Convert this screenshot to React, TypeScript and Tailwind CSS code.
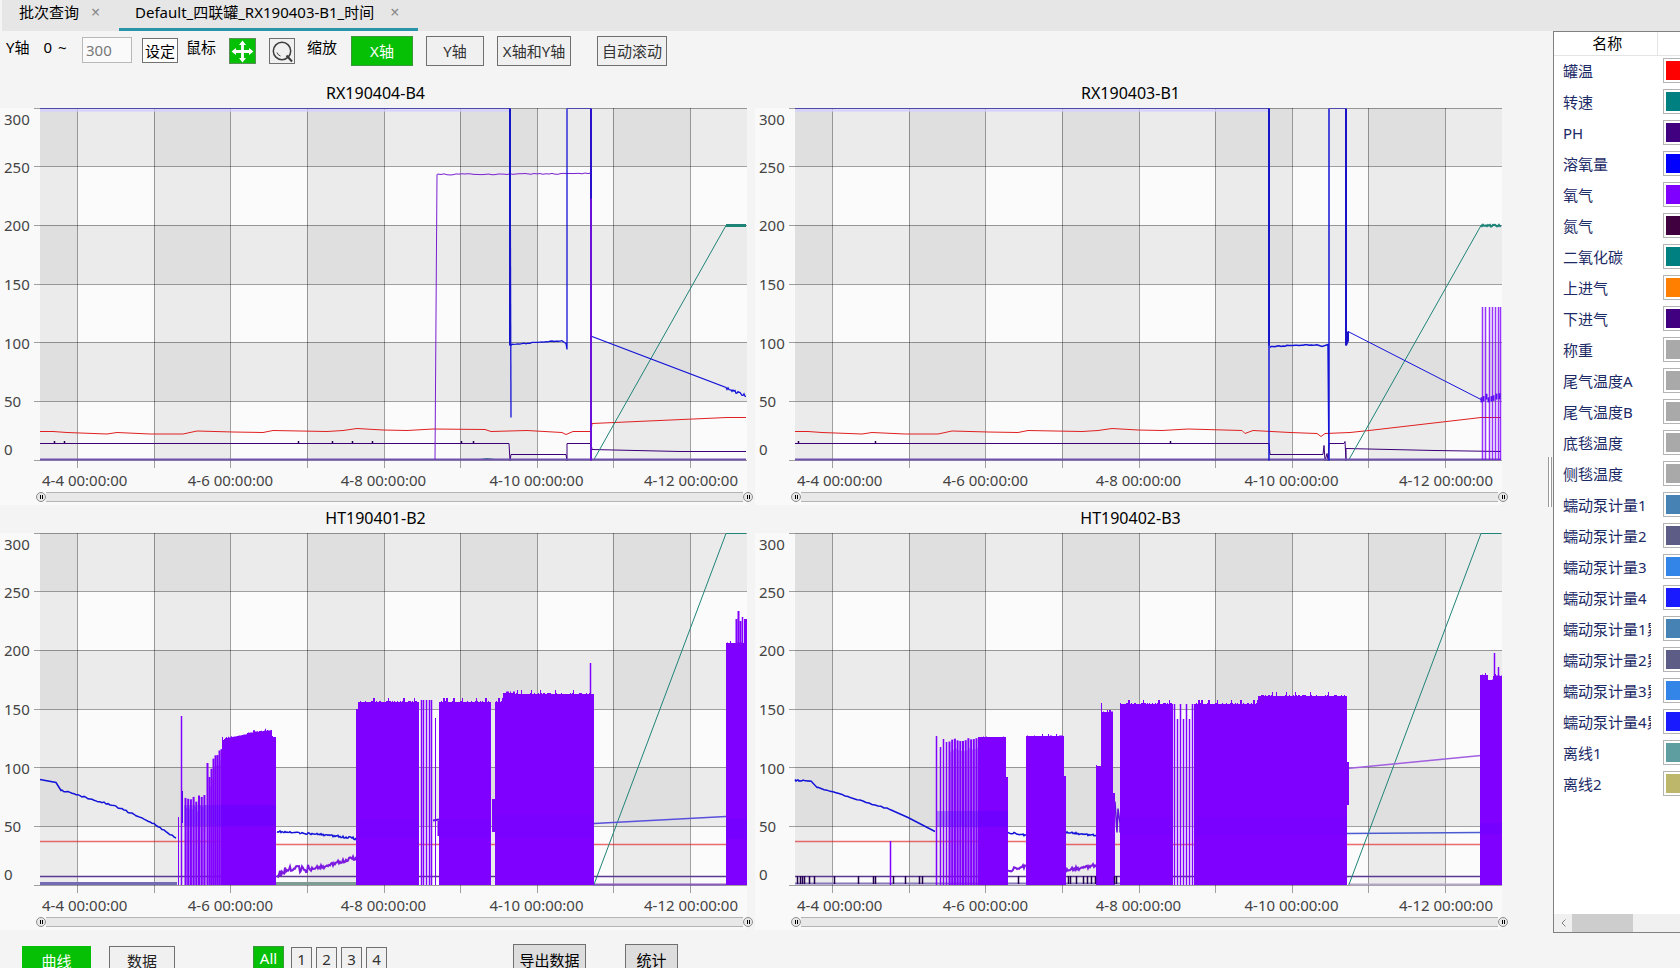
import { useState } from 'react';
import clsx from 'clsx';

type Point = [number, number];

interface Line {
  points: Point[];
  color: string;
  width?: number;
  opacity?: number;
}

interface Block {
  from: number;
  to: number;
  top: number;
  topEnd?: number;
  jitter?: number;
}

interface Band {
  from: number;
  to: number;
  top: number;
  bottom: number;
  opacity?: number;
}

interface Spike {
  x: number;
  top: number;
  bottom?: number;
  width?: number;
  color?: string;
  opacity?: number;
}

interface ChartData {
  title: string;
  lines: Line[];
  blocks?: Block[];
  bands?: Band[];
  spikes?: Spike[];
}

interface Channel {
  name: string;
  color: string;
}

// 曲线颜色
const RED = '#e02020';
const TEAL = '#1f8478';
const INDIGO = '#3a0078';
const BLUE = '#1414d8';
const PURPLE = '#8000ff';

// 绘图区坐标系
const W = 707;
const H = 352;
const GRID_X = [37, 114, 190, 267, 344, 420, 497, 573, 650];
const GRID_Y = [0, 58, 117, 176, 234, 293, 352];

const rand = (n: number) => {
  const v = Math.sin(n * 127.1 + 11.7) * 43758.5453;
  return v - Math.floor(v);
};

// 在两点之间生成带噪声的曲线
const noisy = (from: Point, to: Point, amp: number, step = 1): Point[] => {
  const result: Point[] = [];
  for (let x = from[0]; x <= to[0]; x += step) {
    const t = (x - from[0]) / (to[0] - from[0]);
    result.push([x, from[1] + (to[1] - from[1]) * t + (rand(x * 3.3) - 0.5) * 2 * amp]);
  }
  return result;
};

const comb = (from: number, to: number, step: number, top: number, topEnd: number, amp = 3): Spike[] => {
  const result: Spike[] = [];
  for (let x = from; x <= to; x += step) {
    const t = (x - from) / (to - from);
    const y = top + (topEnd - top) * t + rand(x) * amp;
    result.push({ x, top: y, width: 2 });
    result.push({ x: x + 1, top: y + 10, width: 2, opacity: 0.4 });
  }
  return result;
};

const marks = (xs: number[], top: number, bottom: number): Spike[] =>
  xs.map((x) => ({ x, top, bottom, color: '#240050', width: 1.5 }));

const blockPath = ({ from, to, top, topEnd = top, jitter = 2 }: Block) => {
  let d = `M${from} ${H}`;
  for (let x = from; x <= to; x += 1) {
    const t = (x - from) / (to - from || 1);
    const r = rand(x * 1.7);
    const y = top + (topEnd - top) * t - (r > 0.85 ? jitter * 2 : r > 0.6 ? jitter / 2 : 0);
    d += `V${y.toFixed(1)}H${Math.min(x + 1, to)}`;
  }
  return `${d}V${H}Z`;
};

const redStart: Point[] = [
  [0, 323], [13, 323], [27, 324], [67, 325.5], [77, 324], [110, 325.5], [143, 325.5], [157, 322.5],
  [193, 323.5], [223, 324], [233, 322], [287, 323], [303, 322], [317, 320], [343, 321.5], [367, 322], [393, 320.5],
];

const charts: ChartData[] = [
  {
    title: 'RX190404-B4',
    lines: [
      { points: [[0, 2], [470, 2]], color: '#d4d0ff', width: 2 },
      { points: [[0, 0], [470, 0]], color: '#4f48ac' },
      { points: [[396, 351], [440, 351], [447, 350], [455, 351], [551, 351]], color: TEAL },
      { points: [...redStart, [445, 321], [451, 323], [487, 322], [522, 324], [526, 326], [533, 323], [551, 323], [552, 315], [687, 309], [706, 309]], color: RED },
      { points: [[0, 335], [469, 335], [470, 352], [471, 346], [526, 346], [527, 352], [527, 335], [551, 335], [552, 341], [640, 343], [706, 343]], color: INDIGO },
      { points: [[554, 351], [686, 117]], color: TEAL },
      { points: [[686, 117], [706, 117]], color: TEAL, width: 3 },
      { points: [[0, 351], [706, 351]], color: '#6f52b0', width: 2 },
      { points: [[395, 351], [397, 66], ...noisy([398, 66], [551, 65], 0.6, 3), [551, 352]], color: '#7a1fd0' },
      { points: [[470, 0], [471, 309]], color: BLUE, width: 1.3 },
      { points: [[470, 0], [470, 237]], color: '#1616c8', width: 2 },
      { points: [[471, 237], ...noisy([472, 236], [522, 232], 0.5, 2), [526, 235], [527, 241], [527, 0]], color: BLUE, width: 1.3 },
      { points: [[527, 0], [551, 0]], color: '#4f48ac' },
      { points: [[551, 0], [551, 228]], color: '#2a10cc', width: 2 },
      { points: [[551, 90], [551, 352]], color: '#6a10d8', width: 2 },
      { points: [[552, 228], [686, 279], ...noisy([687, 280], [706, 287], 1.5)], color: BLUE, width: 1.3 },
    ],
    spikes: marks([14, 24, 258, 292, 312, 332, 421, 433], 333, 335),
  },
  {
    title: 'RX190403-B1',
    lines: [
      { points: [[0, 2], [474, 2]], color: '#d4d0ff', width: 2 },
      { points: [[0, 0], [474, 0]], color: '#4f48ac' },
      { points: [...redStart, [447, 322], [450, 325], [458, 322], [495, 324], [522, 325], [526, 328], [530, 325], [555, 324], [574, 322], [686, 309], [706, 309]], color: RED },
      { points: [[0, 335], [474, 335], [475, 346], [528, 346], [529, 337], [530, 352], [532, 345], [533, 352], [534, 335], [549, 335], [550, 333], [551, 352], [551, 340], [640, 342], [706, 343]], color: INDIGO },
      { points: [[554, 351], [686, 117]], color: TEAL },
      { points: noisy([686, 117], [706, 117], 1), color: TEAL, width: 2 },
      { points: [[0, 351], [706, 351]], color: '#6f52b0', width: 2 },
      { points: [[474, 0], [474, 352]], color: BLUE, width: 1.5 },
      { points: [[474, 0], [474, 237]], color: '#1616c8', width: 2 },
      { points: [[475, 239], ...noisy([476, 238], [522, 236], 0.5, 2), [527, 238], [533, 236], [534, 352], [534, 0]], color: BLUE, width: 1.5 },
      { points: [[534, 0], [551, 0]], color: '#4f48ac' },
      { points: [[551, 0], [551, 237], [553, 232], [553, 223]], color: '#1a12c8', width: 2 },
      { points: [[553, 223], [686, 291]], color: BLUE },
    ],
    spikes: [
      ...marks([3, 80, 375], 333, 335),
      ...[687, 690, 694, 697, 700, 703, 705].map((x) => ({ x, top: 199, width: 1.5, opacity: 0.8 })),
      ...[686, 688, 691, 693, 696, 698, 701, 704].map((x) => ({ x, top: 285 + rand(x) * 5, bottom: 291 + rand(x) * 4, color: '#5a10f0', width: 2 })),
    ],
  },
  {
    title: 'HT190401-B2',
    lines: [
      { points: [[0, 308], [233, 308]], color: RED, width: 1.5, opacity: 0.65 },
      { points: [[236, 311], [706, 311]], color: RED, width: 1.5, opacity: 0.65 },
      { points: [[0, 343], [706, 343]], color: '#5b3a92', width: 1.5 },
      { points: [[0, 350], [137, 350]], color: '#736cb4', width: 3 },
      { points: [[236, 350], [316, 350]], color: '#7c9c94', width: 3 },
      { points: [[553, 351], [686, 351]], color: '#8a5cc0', width: 2 },
      { points: [[554, 351], [686, 0], [706, 0]], color: TEAL },
      { points: [[0, 246], [16, 249], [21, 257], ...noisy([22, 257], [73, 272], 0.8, 2), ...noisy([74, 272], [113, 290], 0.8, 2), ...noisy([114, 290], [137, 305], 0.8, 2)], color: BLUE, width: 1.5 },
      { points: [...noisy([237, 298], [281, 301], 0.8), ...noisy([282, 301], [316, 305], 1.2)], color: BLUE, width: 1.5 },
      { points: [[554, 290], [686, 283]], color: '#5a50dc', width: 1.5 },
      { points: [...noisy([237, 341], [243, 339], 3), ...noisy([244, 337], [268, 335], 4), ...noisy([269, 336], [290, 332], 2), ...noisy([291, 331], [316, 324], 2)], color: '#7d1ae0', width: 2 },
      { points: [[393, 287], [399, 286]], color: '#5a10e0', width: 2 },
    ],
    blocks: [
      { from: 182, to: 187, top: 208, topEnd: 203 },
      { from: 187, to: 207, top: 205, topEnd: 201 },
      { from: 207, to: 232, top: 200, topEnd: 197, jitter: 1 },
      { from: 232, to: 236, top: 204 },
      { from: 316, to: 318, top: 177 },
      { from: 318, to: 379, top: 169 },
      { from: 399, to: 451, top: 169 },
      { from: 455, to: 463, top: 169 },
      { from: 463, to: 475, top: 160, jitter: 3 },
      { from: 475, to: 554, top: 161 },
      { from: 686, to: 707, top: 110, jitter: 1 },
    ],
    bands: [
      { from: 144, to: 236, top: 272, bottom: 293, opacity: 0.3 },
      { from: 318, to: 379, top: 286, bottom: 305 },
      { from: 399, to: 451, top: 286, bottom: 305 },
      { from: 455, to: 554, top: 282, bottom: 305 },
      { from: 686, to: 707, top: 286, bottom: 306, opacity: 0.2 },
    ],
    spikes: [
      { x: 138, top: 284 },
      { x: 141, top: 183, width: 1.5 },
      { x: 142, top: 258, bottom: 290, color: '#4a10e0' },
      ...comb(145, 165, 2.7, 264, 258, 8),
      { x: 167, top: 230, width: 2 },
      ...comb(169, 173, 2, 243, 222, 4),
      ...comb(175, 181, 2, 218, 213, 6),
      ...[381, 383, 386, 389, 391].map((x) => ({ x, top: 167, width: 1.5 })),
      { x: 395, top: 185 },
      { x: 398, top: 288, bottom: 303, width: 2 },
      { x: 453, top: 266, bottom: 299, width: 3 },
      { x: 550, top: 130, width: 1.5 },
      { x: 696, top: 86, width: 2 },
      { x: 698, top: 78, width: 2 },
      { x: 700, top: 88, width: 2 },
      { x: 702, top: 84, width: 1.5 },
      { x: 705, top: 86, width: 3 },
    ],
  },
  {
    title: 'HT190402-B3',
    lines: [
      { points: [[0, 308], [270, 308]], color: RED, width: 1.5, opacity: 0.65 },
      { points: [[271, 311], [706, 311]], color: RED, width: 1.5, opacity: 0.65 },
      { points: [[0, 343], [706, 343]], color: '#5b3a92', width: 1.5 },
      { points: [[0, 350], [325, 350]], color: '#8878bc', width: 2 },
      { points: [[553, 351], [686, 351]], color: '#b4a8c4', width: 2 },
      { points: [[554, 351], [686, 0], [706, 0]], color: TEAL },
      { points: [[0, 246], ...noisy([1, 247], [16, 247], 0.8), [22, 254], ...noisy([23, 254], [95, 276], 0.5, 3), [113, 284], [140, 298]], color: BLUE, width: 1.5 },
      { points: noisy([213, 299], [231, 302], 1), color: BLUE, width: 1.5 },
      { points: noisy([271, 299], [301, 302], 1), color: BLUE, width: 1.5 },
      { points: [[320, 268], [322, 299], [323, 275], [325, 290], [325, 299]], color: '#6410e0', width: 1.5 },
      { points: [[552, 300], [686, 299]], color: '#4a5cd0', width: 1.5 },
      { points: [[552, 235], [686, 222]], color: '#a060e0', width: 1.5 },
      { points: noisy([213, 337], [231, 333], 2), color: '#7d1ae0', width: 2 },
      { points: noisy([271, 337], [301, 332], 2), color: '#7d1ae0', width: 2 },
    ],
    blocks: [
      { from: 183, to: 211, top: 204, jitter: 1 },
      { from: 211, to: 213, top: 244 },
      { from: 231, to: 269, top: 203, jitter: 1 },
      { from: 269, to: 271, top: 243 },
      { from: 301, to: 306, top: 233 },
      { from: 306, to: 318, top: 179, jitter: 1 },
      { from: 318, to: 320, top: 260 },
      { from: 325, to: 378, top: 171 },
      { from: 399, to: 463, top: 171 },
      { from: 463, to: 552, top: 163 },
      { from: 685, to: 693, top: 142, jitter: 1 },
      { from: 693, to: 698, top: 147, jitter: 1 },
      { from: 698, to: 707, top: 143, jitter: 1 },
    ],
    bands: [
      { from: 142, to: 213, top: 278, bottom: 294, opacity: 0.35 },
      { from: 325, to: 378, top: 284, bottom: 302 },
      { from: 399, to: 552, top: 284, bottom: 302 },
      { from: 685, to: 707, top: 290, bottom: 301, opacity: 0.2 },
    ],
    spikes: [
      ...marks([2, 5, 7, 9, 14, 19, 39, 63, 78, 80, 98, 110, 124, 127, 223, 273, 275, 281, 288, 292, 296, 300, 319, 321], 343, 351),
      { x: 95, top: 308, width: 1.5 },
      { x: 141, top: 203, width: 1.5 },
      { x: 145, top: 214, width: 1.5 },
      { x: 148, top: 206, width: 1.5 },
      { x: 151, top: 209, width: 1.5 },
      ...comb(154, 182, 2.7, 206, 203, 4),
      { x: 306, top: 170 },
      ...[379, 382, 385, 388, 391, 394, 397].map((x) => ({ x, top: x % 2 ? 171 : 186, width: 1.5 })),
      { x: 552, top: 229, bottom: 272, width: 3 },
      { x: 699, top: 120, width: 1.5 },
      { x: 703, top: 134, width: 1.5 },
    ],
  },
];

const channels: Channel[] = [
  { name: '罐温', color: '#ff0000' },
  { name: '转速', color: '#008080' },
  { name: 'PH', color: '#400080' },
  { name: '溶氧量', color: '#0000ff' },
  { name: '氧气', color: '#8000ff' },
  { name: '氮气', color: '#400040' },
  { name: '二氧化碳', color: '#008080' },
  { name: '上进气', color: '#ff8000' },
  { name: '下进气', color: '#400080' },
  { name: '称重', color: '#a9a9a9' },
  { name: '尾气温度A', color: '#a9a9a9' },
  { name: '尾气温度B', color: '#a9a9a9' },
  { name: '底毯温度', color: '#a9a9a9' },
  { name: '侧毯温度', color: '#a9a9a9' },
  { name: '蠕动泵计量1', color: '#4682b4' },
  { name: '蠕动泵计量2', color: '#5c5c86' },
  { name: '蠕动泵计量3', color: '#3385e8' },
  { name: '蠕动泵计量4', color: '#1a1aff' },
  { name: '蠕动泵计量1累计', color: '#4682b4' },
  { name: '蠕动泵计量2累计', color: '#5c5c86' },
  { name: '蠕动泵计量3累计', color: '#3385e8' },
  { name: '蠕动泵计量4累计', color: '#1a1aff' },
  { name: '离线1', color: '#5f9ea0' },
  { name: '离线2', color: '#bdb76b' },
];

// 绘图区：底纹、网格和曲线
function Plot({ data }: { data: ChartData }) {
  const columns = [0, ...GRID_X, W];
  return (
    <svg
      viewBox={`0 0 ${W} ${H}`}
      preserveAspectRatio="none"
      className="block h-88 w-full overflow-visible"
      role="img"
      aria-label={data.title}
    >
      <rect width={W} height={H} fill="#fbfbfb" />
      {columns.slice(0, -1).map((x, i) =>
        GRID_Y.slice(0, -1).map((y, j) => {
          const dark = (i % 2 === 0 ? 1 : 0) + (j % 2 === 0 ? 1 : 0);
          if (!dark) return null;
          return (
            <rect
              key={`${i}-${j}`}
              x={x}
              y={y}
              width={columns[i + 1] - x}
              height={GRID_Y[j + 1] - y}
              fill={dark === 2 ? '#dfdfdf' : '#ebebeb'}
              shapeRendering="crispEdges"
            />
          );
        })
      )}
      <g stroke="#000000" strokeOpacity="0.36" shapeRendering="crispEdges">
        {GRID_X.map((x) => (
          <line key={x} x1={x + 0.5} x2={x + 0.5} y1={0} y2={H + 8} />
        ))}
        {GRID_Y.map((y) => (
          <line key={y} x1={-6} x2={W} y1={y + 0.5} y2={y + 0.5} />
        ))}
      </g>
      {data.lines.map((line, i) => (
        <polyline
          key={i}
          points={line.points.map(([x, y]) => `${x},${y + 0.5}`).join(' ')}
          fill="none"
          stroke={line.color}
          strokeWidth={line.width ?? 1}
          strokeOpacity={line.opacity ?? 1}
        />
      ))}
      {data.blocks?.map((block) => (
        <path key={block.from} d={blockPath(block)} fill={PURPLE} />
      ))}
      {data.spikes?.map((s, i) => (
        <line
          key={i}
          x1={s.x + 0.5}
          x2={s.x + 0.5}
          y1={s.top}
          y2={s.bottom ?? H}
          stroke={s.color ?? PURPLE}
          strokeWidth={s.width ?? 1}
          strokeOpacity={s.opacity ?? 1}
        />
      ))}
      {data.bands?.map((b) => (
        <rect
          key={b.from}
          x={b.from}
          y={b.top}
          width={b.to - b.from}
          height={b.bottom - b.top}
          fill="#5000ff"
          fillOpacity={b.opacity ?? 0.12}
        />
      ))}
    </svg>
  );
}

function RangeHandle({ label }: { label: string }) {
  return (
    <button
      aria-label={label}
      className="flex h-[10px] w-[10px] items-center justify-center gap-px rounded-full border border-[#8c8c8c] bg-[#e8e8e8]"
    >
      <span className="h-1 w-px bg-black" />
      <span className="h-1 w-px bg-black" />
    </button>
  );
}

function Chart({ data }: { data: ChartData }) {
  return (
    <section className="flex flex-col pr-2">
      <h2 className="h-7 pl-1 text-center text-[16px] leading-[26px] text-black">{data.title}</h2>
      <div className="flex bg-[#f9f9f9] text-[15px] text-[#444444]">
        <div className="flex h-88 w-10 shrink-0 flex-col pl-1 leading-[22px]">
          <span className="flex-1">300</span>
          {[250, 200, 150, 100, 50].map((value) => (
            <span key={value} className="flex flex-2 items-center">{value}</span>
          ))}
          <span className="flex flex-1 items-end">0</span>
        </div>
        <div className="min-w-0 flex-1">
          <Plot data={data} />
          <div className="mt-2 grid h-6 grid-cols-[114fr_153fr_153fr_153fr_134fr] text-center leading-6 whitespace-nowrap">
            <span className="pl-[2px] text-left">4-4 00:00:00</span>
            <span>4-6 00:00:00</span>
            <span>4-8 00:00:00</span>
            <span>4-10 00:00:00</span>
            <span className="pr-[9px] text-right">4-12 00:00:00</span>
          </div>
          <div className="-mr-[6px] -ml-1 mb-[3px] flex h-[10px] items-center">
            <RangeHandle label="起始时间" />
            <div className="h-[10px] flex-1 border-y border-[#b4b4b4] bg-[#e8e8e8]" />
            <RangeHandle label="结束时间" />
          </div>
        </div>
      </div>
    </section>
  );
}

const tools = [
  { key: 'x', label: 'X轴', className: 'w-[62px]' },
  { key: 'y', label: 'Y轴', className: 'ml-[13px] w-[58px]' },
  { key: 'xy', label: 'X轴和Y轴', className: 'ml-[13px] w-[74px]' },
];

function Toolbar() {
  const [yMax, setYMax] = useState('300');
  const [mouse, setMouse] = useState<'move' | 'zoom'>('move');
  const [axis, setAxis] = useState('x');

  return (
    <div className="flex h-[49px] items-start pt-[5px] pl-[6px] whitespace-nowrap text-black">
      <label htmlFor="y-max" className="flex w-[76px] leading-[22px]">
        Y轴<span className="ml-[14px]">0</span><span className="ml-[6px]">~</span>
      </label>
      <input
        id="y-max"
        value={yMax}
        onChange={(e) => setYMax(e.target.value)}
        className="mt-px h-[26px] w-[50px] border border-[#b8b8b8] bg-[#fafafa] pl-[3px] text-[#777777]"
      />
      <button className="mt-[2px] ml-[10px] h-[25px] w-9 border border-[#707070] bg-white leading-[22px]">设定</button>
      <span className="ml-2 w-[43px] leading-[22px]">鼠标</span>
      <button
        aria-label="移动"
        onClick={() => setMouse('move')}
        className={clsx('mt-[2px] flex h-[26px] w-[27px] items-center justify-center border border-[#5c8c5c]', mouse === 'move' ? 'bg-[#06c006]' : 'bg-[#f0f0f0]')}
      >
        <svg width="23" height="23" viewBox="0 0 23 23" fill="#ffffff">
          <path d="M11.5 0.5L15 5H12.9V10.1H18V8L22.5 11.5L18 15V12.9H12.9V18H15L11.5 22.5L8 18H10.1V12.9H5V15L0.5 11.5L5 8V10.1H10.1V5H8Z" />
        </svg>
      </button>
      <button
        aria-label="框选放大"
        onClick={() => setMouse('zoom')}
        className={clsx('mt-[2px] ml-[13px] flex h-[26px] w-[26px] items-center justify-center border border-[#707070]', mouse === 'zoom' ? 'bg-[#06c006]' : 'bg-[#f0f0f0]')}
      >
        <svg width="24" height="24" viewBox="0 0 24 24" fill="none" stroke="#3c3c3c" strokeWidth="1.5">
          <circle cx="12" cy="12" r="8.7" />
          <path d="M16.5 16.5L22 22.5" strokeWidth="2" />
          <path d="M7 13.5A5.5 5.5 0 0 0 10.5 17" strokeWidth="1" />
        </svg>
      </button>
      <span className="ml-3 w-11 leading-[22px]">缩放</span>
      {tools.map((tool) => (
        <button
          key={tool.key}
          onClick={() => setAxis(tool.key)}
          className={clsx(
            'h-[30px] border leading-7',
            tool.className,
            axis === tool.key ? 'border-[#3c963c] bg-[#06c006] text-white' : 'border-[#707070] bg-[#f0f0f0] text-[#333333]'
          )}
        >
          {tool.label}
        </button>
      ))}
      <button className="ml-[26px] h-[30px] w-[70px] border border-[#707070] bg-[#f0f0f0] leading-7 text-[#333333]">自动滚动</button>
    </div>
  );
}

function ChannelPanel() {
  return (
    <aside className="flex w-[127px] shrink-0 flex-col self-stretch overflow-hidden border-y border-l border-[#808080] bg-white">
      <table className="w-[170px] table-fixed border-collapse">
        <thead>
          <tr className="h-[23px]">
            <th className="w-[103px] border-r border-b border-[#e4e4e4] p-0 pl-1 leading-[22px] font-normal text-black">名称</th>
            <th className="border-b border-[#e4e4e4] p-0" aria-label="颜色" />
          </tr>
        </thead>
        <tbody>
          {channels.map((channel) => (
            <tr key={channel.name} className="h-[31px]">
              <td className="p-0 pl-[9px] text-[#1c2a66]">
                <div className="w-[88px] overflow-hidden leading-6 whitespace-nowrap">{channel.name}</div>
              </td>
              <td className="p-0 pl-[6px]">
                <div className="h-[25px] border border-[#b4b4b4] bg-white p-[2px]">
                  <div className="h-full" style={{ backgroundColor: channel.color }} />
                </div>
              </td>
            </tr>
          ))}
        </tbody>
      </table>
      <div className="mt-auto flex h-[18px] items-center bg-[#f0f0f0]">
        <button aria-label="向左滚动" className="flex h-full w-[18px] items-center justify-center">
          <svg width="5" height="8" viewBox="0 0 5 8" fill="none" stroke="#808080">
            <path d="M4.5 0.5L1 4L4.5 7.5" />
          </svg>
        </button>
        <div className="h-full w-[61px] bg-[#cdcdcd]" />
      </div>
    </aside>
  );
}

export default function App() {
  const [view, setView] = useState('曲线');
  const [tank, setTank] = useState('All');

  return (
    <div className="h-screen overflow-hidden bg-[#f4f4f4] font-['Noto_Sans','Noto_Sans_CJK_SC',sans-serif] text-[15px]">
      {/* 标签页 */}
      <nav className="ml-[2px] flex h-[31px] bg-[#e6e6e6] leading-[25px] text-black">
        <div className="flex w-[117px] items-start pl-[17px]">
          <button>批次查询</button>
          <button aria-label="关闭批次查询" className="ml-3 text-[16px] text-[#888888]">×</button>
        </div>
        <div className="flex w-[299px] items-start border-b-3 border-[#2a94aa] pl-4 whitespace-nowrap">
          <button>Default_四联罐_RX190403-B1_时间</button>
          <button aria-label="关闭时间" className="ml-4 text-[16px] text-[#888888]">×</button>
        </div>
      </nav>

      <div className="flex items-center">
        <main className="min-w-0 flex-1 pb-[3px]">
          <Toolbar />
          <div className="grid grid-cols-2 pr-[38px]">
            {charts.map((chart) => (
              <Chart key={chart.title} data={chart} />
            ))}
          </div>
        </main>
        <div className="mr-px h-[50px] w-1 border-x border-[#9a9a9a] bg-white" />
        <ChannelPanel />
      </div>

      {/* 底部操作栏 */}
      <footer className="flex items-start pt-[11px] pl-[22px] whitespace-nowrap">
        {['曲线', '数据'].map((name) => (
          <button
            key={name}
            onClick={() => setView(name)}
            className={clsx(
              'mt-[2px] mr-[18px] h-[30px] border leading-[26px]',
              view === name ? 'w-[69px] border-[#06c006] bg-[#06c006] text-white' : 'w-[66px] border-[#707070] bg-[#f0f0f0] text-[#222222]'
            )}
          >
            {name}
          </button>
        ))}
        <div className="ml-[60px] flex items-start gap-1">
          {['All', '1', '2', '3', '4'].map((name) => (
            <button
              key={name}
              onClick={() => setTank(name)}
              className={clsx(
                'h-6 border',
                tank === name ? 'mt-[2px] mr-[3px] w-[31px] border-[#3c963c] bg-[#06c006] leading-5 text-white' : 'mt-[3px] w-[21px] border-[#707070] bg-[#f0f0f0] leading-[22px] text-[#333333]'
              )}
            >
              {name}
            </button>
          ))}
        </div>
        <button className="ml-[126px] h-[31px] w-[73px] border border-[#707070] bg-[#dddddd] leading-7 text-black">导出数据</button>
        <button className="ml-[39px] h-[31px] w-[53px] border border-[#707070] bg-[#dddddd] leading-7 text-black">统计</button>
      </footer>
    </div>
  );
}
